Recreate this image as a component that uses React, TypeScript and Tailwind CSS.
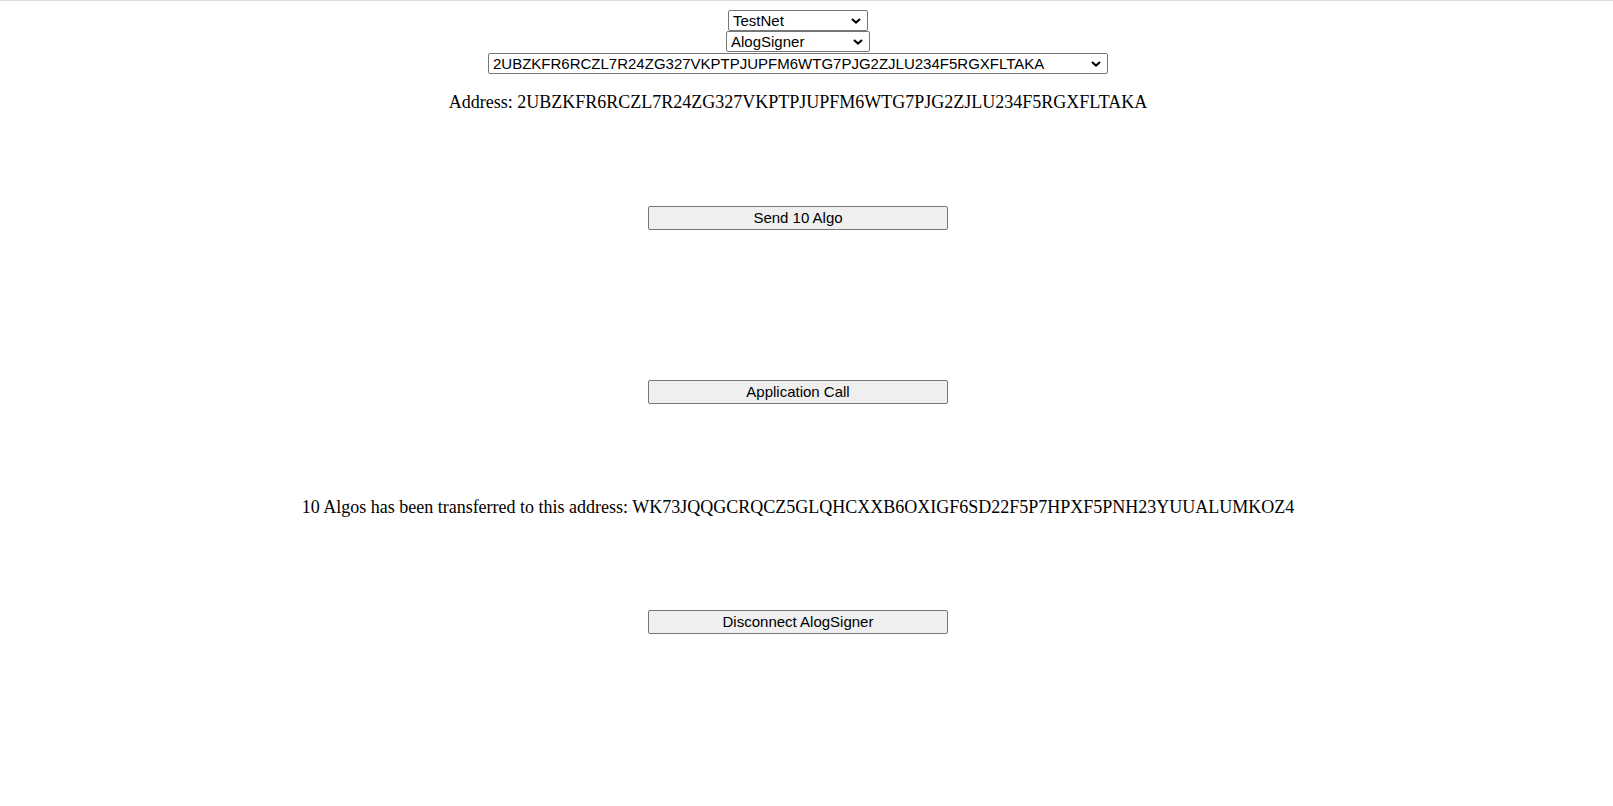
import { useState } from 'react';

const ACCOUNT = '2UBZKFR6RCZL7R24ZG327VKPTPJUPFM6WTG7PJG2ZJLU234F5RGXFLTAKA';
const RECEIVER = 'WK73JQQGCRQCZ5GLQHCXXB6OXIGF6SD22F5P7HPXF5PNH23YUUALUMKOZ4';

function Chevron() {
  return (
    <svg width="10" height="6" viewBox="0 0 10 6" className="pointer-events-none absolute right-[7px] top-1/2 -translate-y-1/2">
      <path d="M1 1l4 3.6L9 1" fill="none" stroke="#000" strokeWidth="2" />
    </svg>
  );
}

function Picker({ value, options, width, onChange }: { value: string; options: string[]; width: string; onChange: (v: string) => void }) {
  return (
    <span className={`relative block ${width}`}>
      <select
        value={value}
        onChange={(e) => onChange(e.target.value)}
        className="block h-[21px] w-full appearance-none rounded-[2px] border border-[#767676] bg-white pl-[4px] pr-5 text-left font-['Liberation_Sans',Arial,sans-serif] text-[15px] leading-[19px] text-black"
      >
        {options.map((o) => (
          <option key={o} value={o}>{o}</option>
        ))}
      </select>
      <Chevron />
    </span>
  );
}

function Btn({ label }: { label: string }) {
  return (
    <button
      type="button"
      className="block h-[24px] w-[300px] rounded-[2px] border border-[#767676] bg-[#efefef] font-['Liberation_Sans',Arial,sans-serif] text-[15px] leading-[22px] text-black hover:bg-[#e5e5e5]"
    >
      {label}
    </button>
  );
}

export default function App() {
  const [net, setNet] = useState('TestNet');
  const [wallet, setWallet] = useState('AlogSigner');
  const [account, setAccount] = useState(ACCOUNT);

  return (
    <div className="min-h-[806px] border-t border-[#dcdcdc] bg-white font-['Liberation_Serif','Times_New_Roman',serif] text-[18px] text-black">
      <div className="flex w-[1596px] flex-col items-center">
        <div className="mt-[9px]">
          <Picker value={net} options={['TestNet', 'MainNet', 'BetaNet']} width="w-[140px]" onChange={setNet} />
        </div>
        <div>
          <Picker value={wallet} options={['AlogSigner', 'MyAlgo', 'Pera']} width="w-[144px]" onChange={setWallet} />
        </div>
        <div className="mt-px">
          <Picker value={account} options={[ACCOUNT]} width="w-[620px]" onChange={setAccount} />
        </div>
        <p className="mt-[19px] leading-[18px]">Address: {account}</p>

        <div className="mt-[95px]">
          <Btn label="Send 10 Algo" />
        </div>
        <div className="mt-[150px]">
          <Btn label="Application Call" />
        </div>
        <p className="mt-[94px] leading-[18px]">10 Algos has been transferred to this address: {RECEIVER}</p>
        <div className="mt-[94px]">
          <Btn label="Disconnect AlogSigner" />
        </div>
      </div>
    </div>
  );
}
